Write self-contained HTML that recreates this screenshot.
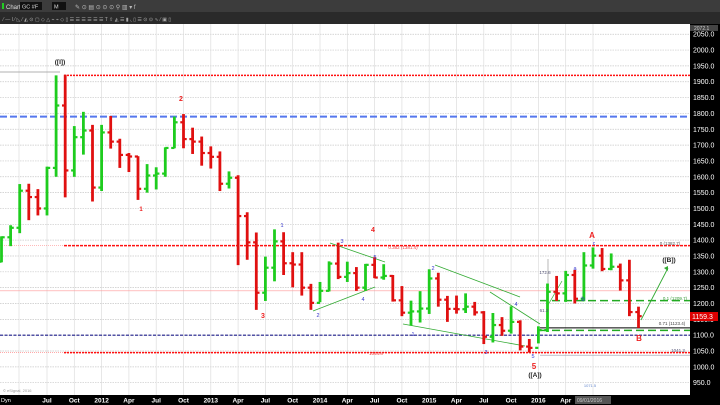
<!DOCTYPE html>
<html><head><meta charset="utf-8">
<style>
html,body{margin:0;padding:0;width:720px;height:405px;overflow:hidden;background:#fff;font-family:"Liberation Sans",sans-serif}
</style></head><body>
<svg id="s" width="720" height="405" viewBox="0 0 720 405" xmlns="http://www.w3.org/2000/svg" font-family="Liberation Sans, sans-serif">
<rect x="0" y="0" width="720" height="12" fill="#3c3c3c"/>
<rect x="0" y="12" width="720" height="12" fill="#2a2a2a"/>
<rect x="2" y="3" width="2" height="6" fill="#2c2"/>
<text x="6" y="9" font-size="6" fill="#ddd">Chart</text>
<rect x="20" y="2" width="22" height="8" fill="#111"/><text x="22" y="8.5" font-size="5.5" fill="#ddd">GC #F</text>
<rect x="52" y="2" width="14" height="8" fill="#111"/><text x="54" y="8.5" font-size="5.5" fill="#ddd">M</text>
<g fill="#bbb" font-size="6"><text x="75" y="9">✎ ⊙ ▤ ⊙ ⊙ ⊙ ⚲ ▥ ▾ f</text></g>
<g fill="#aaa" font-size="5"><text x="3" y="21">⁄ — ⅼ ⁄ ◺ ⁄ ◭ ⊙ ▢ ◇ △ ⌁ ⌁  ◇ ▯ ☰ ☰ ☰ ☰ ☰ ☰  T ⇧ ◭ ☰  ▮ ◟ ▯ ☰ ⊙ ⊙ ∿  ⁄ ▣ ▯</text></g>
<rect x="690" y="24" width="30" height="381" fill="#000"/>
<rect x="0" y="395" width="690" height="10" fill="#000"/>
<g id="grid"></g>
<g id="lines"></g>
<g id="bars"></g>
<g id="ax" font-size="7" fill="#fff"></g>
</svg>
<script>
const s=document.getElementById('s');
const NS='http://www.w3.org/2000/svg';
function el(t,a,p,txt){const e=document.createElementNS(NS,t);for(const k in a)e.setAttribute(k,a[k]);if(txt!==undefined)e.textContent=txt;(p||s).appendChild(e);return e;}
const Y=p=>224.3+(1450-p)*0.3168;
const g=document.getElementById('grid'),L=document.getElementById('lines'),B=document.getElementById('bars'),A=document.getElementById('ax');
for(let p=950;p<=2050;p+=50){const y=Y(p);el('line',{x1:0,x2:690,y1:y,y2:y,stroke:'#c8c8c8','stroke-width':0.7,'stroke-dasharray':'1.5 1'},g);
 el('text',{x:693,y:y+2.5},A,p.toFixed(1));}
const labs=['Jul','Oct','2012','Apr','Jul','Oct','2013','Apr','Jul','Oct','2014','Apr','Jul','Oct','2015','Apr','Jul','Oct','2016','Apr','Jul'];
el('line',{x1:19,x2:19,y1:24,y2:395,stroke:'#ddd','stroke-width':0.7},g);
labs.forEach((t,i)=>{const x=47+i*27.3;el('line',{x1:x,x2:x,y1:24,y2:395,stroke:'#ddd','stroke-width':0.7},g);
 el('text',{x:x,y:402.5,'font-size':6.5,fill:'#fff','text-anchor':'middle','font-weight':'bold'},s,t);});
el('text',{x:1,y:402,'font-size':5.5,fill:'#fff'},s,'Dyn');
el('rect',{x:575,y:396,width:36,height:8,fill:'#555'});
el('text',{x:577,y:402,'font-size':5,fill:'#ccc'},s,'09/01/2016');
function hl(x1,x2,p,c,w,d){const y=typeof p==='string'?+p:Y(p);el('line',{x1,x2,y1:y,y2:y,stroke:c,'stroke-width':w,'stroke-dasharray':d||''},L);}
hl(0,60,'72','#999',0.8);
hl(64,690,1920,'#f11',1.5,'2 1');
hl(0,690,1790,'#5577ee',2,'7 3');
hl(0,690,1382.7,'#f77',0.6,'1 1');hl(64,690,1382.7,'#f11',1.5,'3 1');
hl(0,690,1240,'#f99',0.6);
hl(0,690,1100,'#1a1a88',1.2,'3 1.5');
hl(0,690,1044.8,'#f77',0.6,'1 1');hl(64,690,1044.8,'#f11',1.5,'2 1');
hl(540,690,1037,'#99a',0.6);
hl(540,690,1209,'#2a2',1.5,'8 4');
hl(540,690,1123,'#000',1);
hl(540,690,1115,'#2a2',1.5,'8 4');
function ln(x1,y1,x2,y2,c,w){el('line',{x1,y1,x2,y2,stroke:c||'#3a3','stroke-width':w||0.8},L);}
ln(330,243,385,262);ln(313,311,375,287);ln(435,265,520,297);ln(403,324,525,346);ln(490,292,540,324);
ln(641,320,668,268,'#3a3',0.9);el('path',{d:'M664,268 L668,266 L668,271 Z',fill:'#3a3'},L);
ln(548,305,562,281,'#3a3',0.7);
ln(548,300,548,259,'#888',0.6);
const D=[[1332,1412,1330,1409],[1409,1447,1381,1439],[1439,1577,1422,1556],[1556,1578,1463,1536],[1536,1561,1478,1500],[1500,1632,1478,1628],[1628,1920,1600,1825],[1825,1922,1535,1620],[1620,1760,1600,1725],[1725,1805,1670,1746],[1746,1764,1522,1566],
[1566,1764,1555,1740],[1740,1792,1689,1711],[1711,1720,1628,1669],[1669,1675,1615,1664],[1664,1665,1527,1562],[1562,1640,1550,1604],[1604,1630,1560,1610],[1610,1693,1600,1691],[1691,1790,1690,1772],[1772,1798,1690,1719],[1719,1755,1672,1711],[1711,1727,1635,1675],
[1675,1696,1626,1663],[1663,1680,1555,1578],[1578,1617,1563,1597],[1597,1605,1321,1476],[1476,1488,1338,1393],[1393,1424,1180,1234],[1234,1348,1208,1313],[1313,1434,1270,1396],[1396,1425,1290,1327],[1327,1362,1251,1323],[1323,1362,1225,1250],[1250,1262,1180,1202],
[1202,1268,1204,1240],[1240,1333,1238,1326],[1326,1392,1277,1284],[1284,1332,1268,1296],[1296,1315,1240,1250],[1250,1325,1240,1322],[1322,1346,1280,1282],[1282,1324,1275,1287],[1287,1290,1206,1210],[1210,1255,1160,1171],[1171,1209,1130,1175],[1175,1239,1140,1184],
[1184,1308,1167,1279],[1279,1297,1190,1212],[1212,1224,1142,1183],[1183,1225,1168,1182],[1182,1232,1170,1190],[1190,1205,1162,1172],[1172,1176,1072,1095],[1095,1170,1077,1132],[1132,1157,1098,1114],[1114,1191,1105,1142],[1142,1147,1052,1064],[1064,1088,1046,1060],
[1060,1128,1074,1116],[1116,1263,1110,1237],[1237,1287,1208,1232],[1232,1303,1205,1290],[1290,1306,1200,1215],[1215,1362,1207,1320],[1320,1377,1310,1351],[1351,1375,1302,1309],[1309,1358,1305,1316],[1316,1326,1241,1273],[1273,1338,1160,1173],[1173,1190,1123,1160]];
D.forEach((b,i)=>{const x=1.5+i*9.1;const c=b[3]>=b[0]?'#1ecc1e':'#e01010';
 el('line',{x1:x,x2:x,y1:Y(b[1]),y2:Y(b[2]),stroke:c,'stroke-width':2.8},B);
 el('line',{x1:x-3.2,x2:x,y1:Y(b[0]),y2:Y(b[0]),stroke:c,'stroke-width':2.2},B);
 el('line',{x1:x,x2:x+3.2,y1:Y(b[3]),y2:Y(b[3]),stroke:c,'stroke-width':2.2},B);});
function t(x,y,txt,c,sz,b){el('text',{x,y,'font-size':sz||7,fill:c,'text-anchor':'middle','font-weight':b?'bold':'normal'},s,txt);}
t(60,64,'([I])','#222',6.5,1);t(181,101,'2','#e22',7,1);t(141,211,'1','#e22',6,1);t(263,318,'3','#e22',7,1);t(373,232,'4','#e22',7,1);
t(534,369,'5','#e22',8,1);t(535,377,'([A])','#222',6.5,1);t(592,238,'A','#e22',8,1);t(639,341,'B','#e22',8,1);t(669,262,'([B])','#222',6.5,1);
const bl='#33c';
t(282,227,'1',bl,5.5);t(318,317,'2',bl,5.5);t(342,243,'3',bl,5.5);t(363,301,'4',bl,5.5);t(375,259,'5',bl,5.5);
t(433,270,'2',bl,5.5);t(413,336,'1',bl,5.5);t(486,354,'3',bl,5.5);t(516,306,'4',bl,5.5);t(533,358,'5',bl,5.5);
t(583,301,'b',bl,6);t(575,270,'a',bl,5.5);t(594,245,'c',bl,5);
t(403,249,'0.382 (1381.4)','#e44',4.5);t(376,355,'1044.8','#e44',4.5);t(545,274,'172.6','#557',4.5);t(544,312,'61.3','#557',4.5);
t(670,245,'0 (1382.7)','#555',4.5);t(675,300,'0.1 (1209.7)','#393',4.5);t(672,325,'0.71 (1123.4)','#444',4.5);t(678,352,'1041.3','#557',4.5);
t(590,387,'1071.5','#68c',4);
el('rect',{x:690,y:312,width:28,height:9,fill:'#d00'});
el('text',{x:692,y:319,'font-size':7,fill:'#fff'},s,'1159.3');
el('rect',{x:690,y:25,width:28,height:6,fill:'#444'});
el('text',{x:694,y:30,'font-size':5,fill:'#ccc'},s,'2072.1');
el('text',{x:3,y:392,'font-size':4,fill:'#999'},s,'© eSignal, 2016');
</script>
</body></html>
